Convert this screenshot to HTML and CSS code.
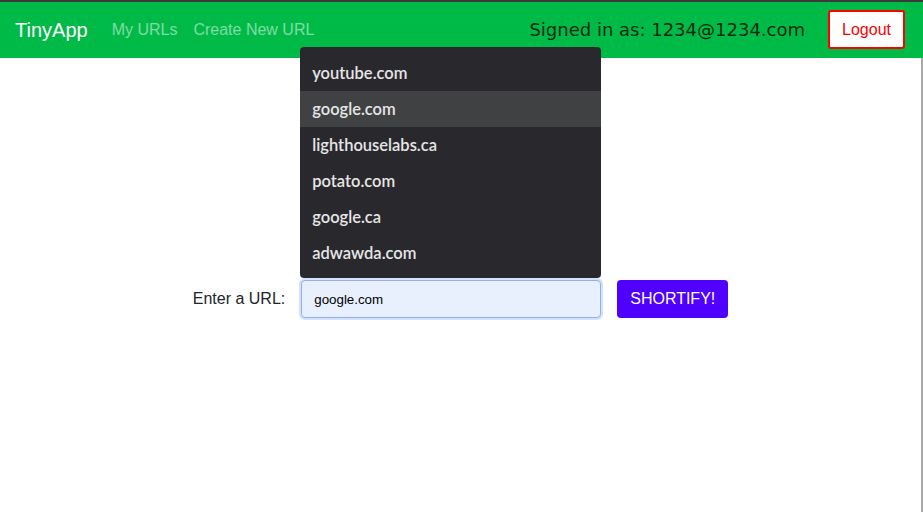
FILE: index.html
```html
<!DOCTYPE html>
<html lang="en">
<head>
<meta charset="utf-8">
<title>TinyApp</title>
<link rel="stylesheet" href="styles.css">
</head>
<body>
<div class="topstrip"></div>
<nav class="navbar">
  <a class="brand" href="#">TinyApp</a>
  <a class="nav-link" href="#">My URLs</a>
  <a class="nav-link" href="#">Create New URL</a>
  <span class="spacer"></span>
  <span class="signed">Signed in as: 1234@1234.com</span>
  <button class="logout" type="button">Logout</button>
</nav>
<main class="main">
  <form class="url-form">
    <label class="url-label" for="longURL">Enter a URL:</label>
    <div class="input-wrap">
      <input id="longURL" class="url-input" type="text" value="google.com">
      <ul class="suggest">
        <li class="suggest-item">youtube.com</li>
        <li class="suggest-item active">google.com</li>
        <li class="suggest-item">lighthouselabs.ca</li>
        <li class="suggest-item">potato.com</li>
        <li class="suggest-item">google.ca</li>
        <li class="suggest-item">adwawda.com</li>
      </ul>
    </div>
    <button class="shortify" type="button">SHORTIFY!</button>
  </form>
</main>
</body>
</html>
```
FILE: styles.css
```css
* { box-sizing: border-box; }
html, body { margin: 0; padding: 0; height: 100%; }
body {
  font-family: "Liberation Sans", Arial, sans-serif;
  color: #212529;
  background: #fff;
  display: flex;
  flex-direction: column;
}
.topstrip { height: 2px; background: #3b3b3b; flex: none; }
.navbar {
  flex: none;
  height: 56px;
  background: #00ba48;
  display: flex;
  align-items: center;
  padding: 0 18px 0 15px;
}
.brand {
  font-size: 20px;
  color: #fff;
  text-decoration: none;
  margin-right: 16px;
}
.nav-link {
  font-size: 16px;
  color: rgba(255,255,255,0.5);
  text-decoration: none;
  padding: 0 8px;
}
.spacer { flex: 1; }
.signed {
  font-family: "DejaVu Sans", sans-serif;
  font-size: 18px;
  color: rgba(0,0,0,0.8);
  margin-right: 23px;
  position: relative;
  top: -1px;
}
.logout {
  font-family: "Liberation Sans", Arial, sans-serif;
  font-size: 16px;
  color: #ff0000;
  background: #fff;
  border: 2px solid #ff0000;
  border-radius: 3px;
  width: 77px;
  height: 39px;
  padding: 0;
  position: relative;
  top: -0.5px;
}
.main {
  flex: 1;
  border-right: 2px solid #a9a9a9;
}
.url-form {
  margin-top: 222px;
  display: flex;
  justify-content: center;
  align-items: center;
  gap: 16px;
}
.url-label { font-size: 16px; color: #212529; }
.input-wrap { position: relative; }
.url-input {
  width: 300px;
  height: 38px;
  padding: 0 12px;
  font-family: "Liberation Sans", Arial, sans-serif;
  font-size: 13.33px;
  color: #000;
  background: #e8f0fe;
  border: 1px solid #8fb0ee;
  border-radius: 4px;
  box-shadow: 0 0 0 2px rgba(160,190,248,0.45);
  outline: none;
}
.suggest {
  position: absolute;
  left: -1px;
  bottom: calc(100% + 2px);
  width: 301px;
  margin: 0;
  padding: 8px 0 7px;
  list-style: none;
  background: #29282d;
  border-radius: 4px;
}
.suggest-item {
  height: 36px;
  line-height: 36px;
  padding: 0 12px;
  font-family: Lato, "Open Sans", sans-serif;
  font-weight: 600;
  font-size: 16.5px;
  color: #e6e6e6;
}
.suggest-item.active { background: #404143; }
.shortify {
  font-family: "Liberation Sans", Arial, sans-serif;
  font-size: 16px;
  color: #fff;
  background: #5000ff;
  border: none;
  border-radius: 4px;
  width: 111px;
  height: 38px;
  padding: 0;
}
```
